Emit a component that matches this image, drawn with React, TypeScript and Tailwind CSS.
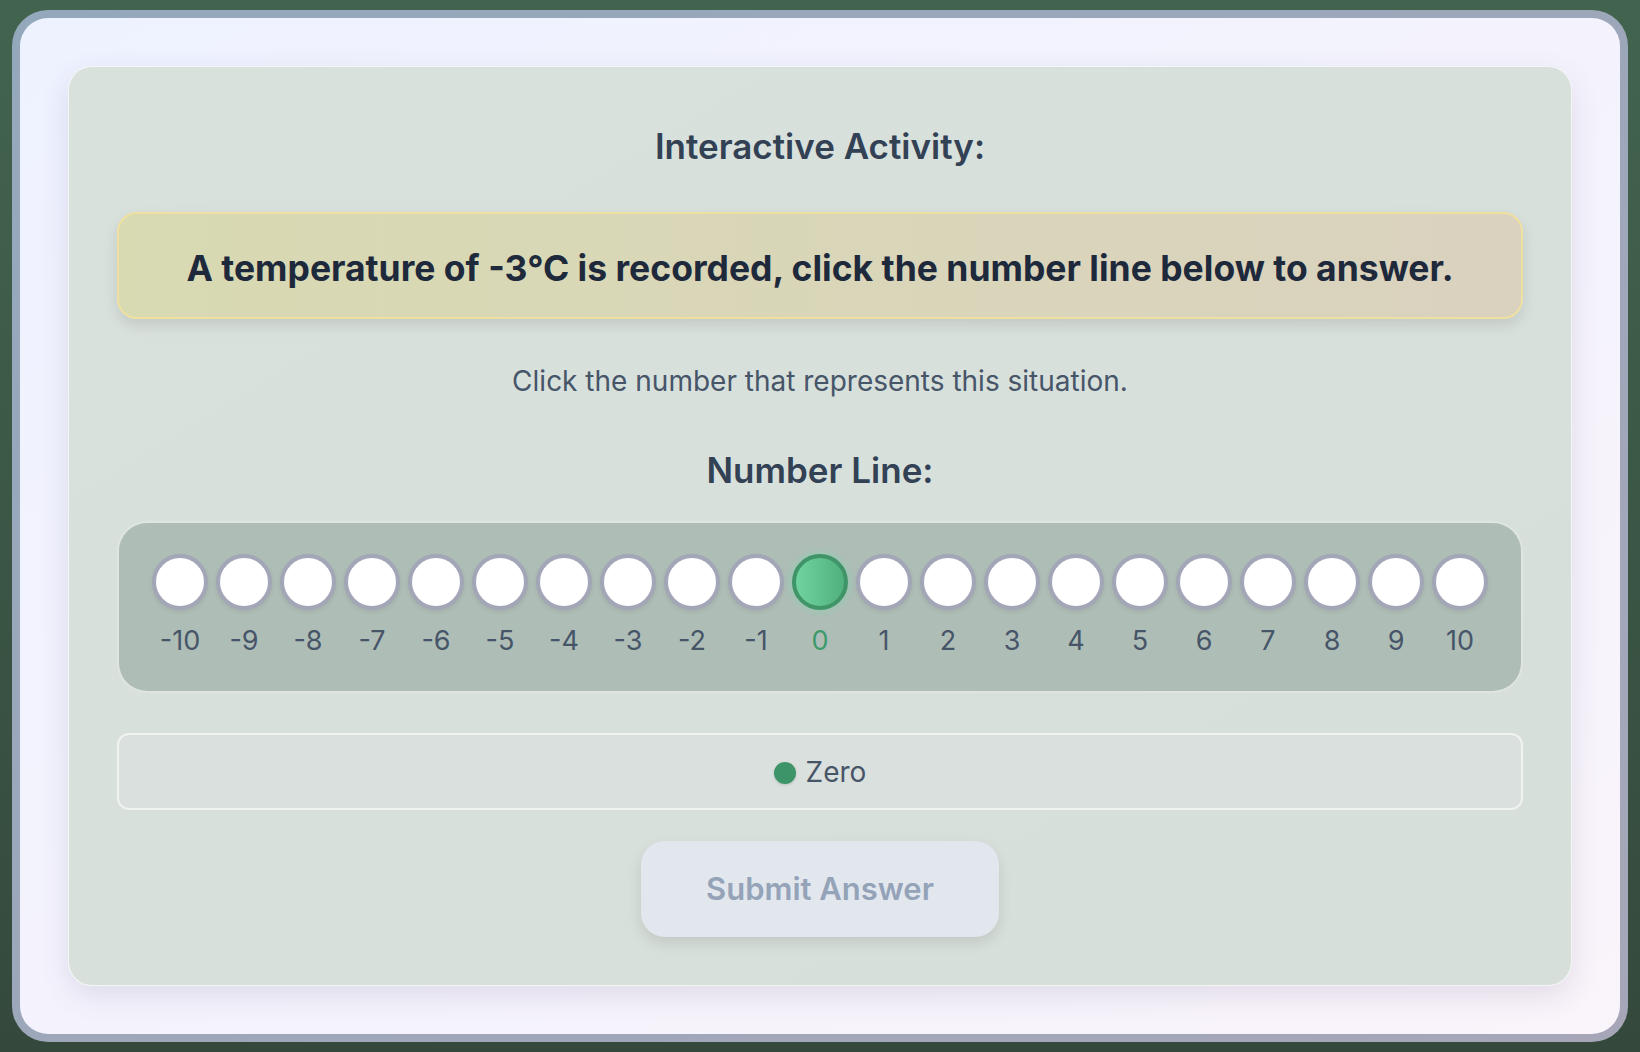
import React from "react";

const numbers = Array.from({ length: 21 }, (_, i) => i - 10);

export default function App() {
  return (
    <div
      className="h-screen w-full bg-gradient-to-b from-[#42644f] to-[#34493c] px-3 py-[10px]"
      style={{ fontFamily: "Inter, 'Noto Sans', sans-serif" }}
    >
      {/* outer frame */}
      <div className="h-full rounded-[36px] bg-gradient-to-br from-[#94a8bc] to-[#a6a6b8] p-2">
        <div className="h-full rounded-[28px] bg-gradient-to-br from-[#eef2ff] to-[#faf4fb] px-[48px] py-[48px]">
          {/* activity card */}
          <div className="flex h-full flex-col items-center rounded-3xl border border-white/70 bg-gradient-to-br from-[#d9e1dd] to-[#d6dfda] px-12 pt-[57px] shadow-[0_10px_30px_rgba(60,50,90,0.12)]">
            <h2 className="text-[35px] font-semibold leading-[44px] text-[#334155]">
              Interactive Activity:
            </h2>

            <div className="mt-[44px] w-full rounded-[20px] border-2 border-[#efe0a0] bg-gradient-to-r from-[#d8dab2] to-[#dad2bf] pt-[33px] pb-[27px] text-center shadow-[0_6px_14px_rgba(0,0,0,0.10)]">
              <p className="text-[35.5px] font-bold leading-[43px] text-[#1e293b]">
                A temperature of -3°C is recorded, click the number line below to answer.
              </p>
            </div>

            <p className="mt-[44px] text-[28px] leading-[36px] text-[#475569]">
              Click the number that represents this situation.
            </p>

            <h3 className="mt-[50px] text-[35px] font-semibold leading-[42px] text-[#334155]">
              Number Line:
            </h3>

            {/* number line */}
            <div className="mt-[30px] flex w-full justify-center gap-2 rounded-[30px] border-2 border-white/60 bg-[#afbdb7] pt-[31px] pb-[32px]">
              {numbers.map((n) => (
                <div key={n} className="flex w-14 flex-col items-center">
                  {n === 0 ? (
                    <div className="h-14 w-14 rounded-full border-4 border-[#3f9468] bg-gradient-to-r from-[#70d4a0] to-[#50b07e] shadow-[0_0_10px_rgba(120,220,170,0.7)]" />
                  ) : (
                    <div className="h-14 w-14 rounded-full border-4 border-[#a2a6b6] bg-white shadow-[0_2px_4px_rgba(0,0,0,0.08)]" />
                  )}
                  <span
                    className={
                      n === 0
                        ? "mt-[13px] text-[27px] leading-[36px] text-[#3d9a6a]"
                        : "mt-[13px] text-[27px] leading-[36px] text-[#475569]"
                    }
                  >
                    {n}
                  </span>
                </div>
              ))}
            </div>

            {/* legend */}
            <div className="mt-[40px] flex w-full items-center justify-center gap-[10px] rounded-xl border-2 border-white/60 bg-[#dae0dd] pt-[19px] pb-[17px]">
              <span className="h-[22px] w-[22px] rounded-full bg-[#3d9468] shadow-[0_1px_3px_rgba(0,0,0,0.15)]" />
              <span className="text-[28px] leading-[37px] text-[#475569]">Zero</span>
            </div>

            <button
              disabled
              className="mt-[31px] h-[96px] w-[358px] rounded-3xl bg-[#e2e7ee] text-[31px] font-semibold text-[#94a3b8] shadow-[0_6px_14px_rgba(0,0,0,0.10)]"
            >
              Submit Answer
            </button>
          </div>
        </div>
      </div>
    </div>
  );
}
